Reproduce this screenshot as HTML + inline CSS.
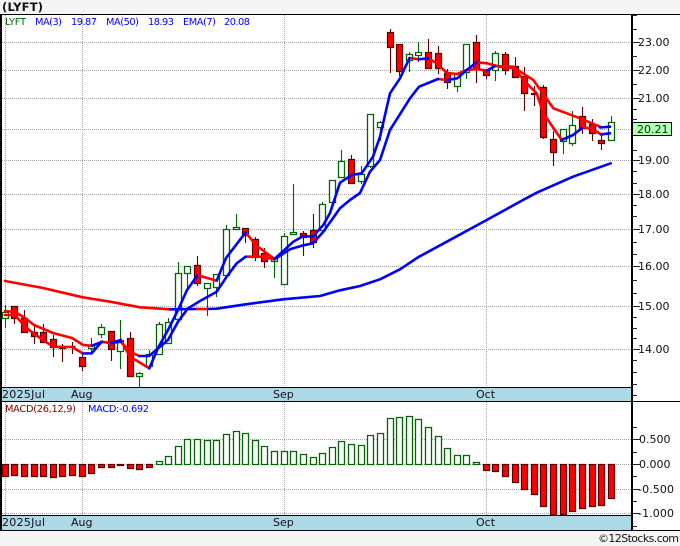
<!DOCTYPE html>
<html lang="en">
<head>
<meta charset="utf-8">
<title>LYFT</title>
<style>
html,body{margin:0;padding:0;background:#f4f4f4;width:680px;height:546px;overflow:hidden}
svg{display:block}
text{font-family:"DejaVu Sans","Liberation Sans",sans-serif;font-size:11px;fill:#111}
.l{font-size:9.8px}
</style>
</head>
<body>
<svg width="680" height="546" viewBox="0 0 680 546" xmlns="http://www.w3.org/2000/svg">
<rect width="680" height="546" fill="#f4f4f4"/>
<rect x="0" y="14" width="680" height="516" fill="#fff"/>
<rect x="0" y="388" width="632" height="13" fill="#add8e6"/>
<rect x="0" y="516" width="632" height="14" fill="#add8e6"/>

<!-- grid -->
<path fill="none" stroke="#a4a4a4" stroke-dasharray="1 1" d="M2 42.5H632M2 70.5H632M2 98.5H632M2 129.5H632M2 160.5H632M2 194.5H632M2 229.5H632M2 266.5H632M2 306.5H632M2 349.5H632M2 439.5H632M2 464.5H632M2 489.5H632M2 513.5H632M5.5 15V387M82.5 15V387M284.5 15V387M486.5 15V387M5.5 402V515M82.5 402V515M284.5 402V515M486.5 402V515"/>

<!-- frame -->
<path fill="none" stroke="#000" d="M0 14.5H680M0 387.5H632M0 401.5H680M0 515.5H632M0 530.5H680"/>
<path fill="none" stroke="#000" stroke-width="2" d="M1 14V530M632 14V530"/>
<path fill="none" stroke="#fff" stroke-width="1" d="M1.5 388V388"/>
<!-- right ticks -->
<path fill="none" stroke="#222" d="M632 42.5H640M632 70.5H640M632 98.5H640M632 129.5H640M632 160.5H640M632 194.5H640M632 229.5H640M632 266.5H640M632 306.5H640M632 349.5H640M632 15.5H637M632 29.5H637M632 56.5H637M632 84.5H637M632 109.5H637M632 119.5H637M632 150.5H637M632 171.5H637M632 183.5H637M632 205.5H637M632 216.5H637M632 242.5H637M632 254.5H637M632 280.5H637M632 293.5H637M632 317.5H637M632 328.5H637M632 338.5H637M632 360.5H637M632 372.5H637M632 384.5H637M632 395.5H637M632 439.5H640M632 464.5H640M632 489.5H640M632 513.5H640M632 427.5H637M632 452.5H637M632 476.5H637M632 501.5H637M632 526.5H637"/>

<!-- wicks -->
<path fill="none" stroke="#006400" stroke-width="1.1" d="M5.5 305V328M91.5 338V353M101.5 324V338M120.5 320V369M139.5 372V387M149.5 350V367M159.5 322V354M168.5 318V343M178.5 262V320M187.5 266V289M207.5 283V316M216.5 274V297M226.5 225V276M236.5 214V228M274.5 258V278M284.5 233V285M293.5 184V233M322.5 202V231M332.5 180V203M341.5 150V178M361.5 166V184M370.5 114V168M380.5 121V141M409.5 52V72M418.5 42V62M457.5 74V92M466.5 44V79M495.5 51V81M563.5 129V154M572.5 111V146M611.5 116V141"/>
<path fill="none" stroke="#5a0000" stroke-width="1.1" d="M14.5 306V324M24.5 310V333M34.5 324V344M43.5 324V343M53.5 335V357M62.5 344V362M72.5 342V354M82.5 354V371M111.5 331V361M130.5 332V376M197.5 256V286M245.5 228V243M255.5 237V261M264.5 248V268M303.5 231V256M313.5 214V248M351.5 155V184M390.5 29V73M399.5 44V76M428.5 39V68M438.5 46V74M447.5 69V89M476.5 35V83M486.5 69V79M505.5 52V75M515.5 57V78M524.5 67V111M534.5 86V106M543.5 85V139M553.5 131V166M582.5 107V134M592.5 119V141M601.5 135V150"/>

<!-- green bodies -->
<path fill="#fff" stroke="#006400" stroke-width="1.3" d="M2.5 312.5h6v6h-6zM88.5 345.5h6v3h-6zM98.5 327.5h6v7h-6zM117.5 340.5h6v11h-6zM136.5 373.5h6v3h-6zM146.5 354.5h6v12h-6zM156.5 324.5h6v30h-6zM165.5 322.5h6v21h-6zM175.5 273.5h6v46h-6zM184.5 266.5h6v7h-6zM204.5 283.5h6v5h-6zM213.5 274.5h6v13h-6zM223.5 229.5h6v46h-6zM233.5 227.5h6v2h-6zM271.5 258.5h6v3h-6zM281.5 236.5h6v48h-6zM290.5 232.5h6v2h-6zM319.5 204.5h6v26h-6zM329.5 180.5h6v22h-6zM338.5 161.5h6v16h-6zM358.5 174.5h6v7h-6zM367.5 114.5h6v52h-6zM377.5 122.5h6v5h-6zM406.5 54.5h6v6h-6zM415.5 52.5h6v3h-6zM454.5 74.5h6v12h-6zM463.5 44.5h6v28h-6zM492.5 53.5h6v17h-6zM560.5 129.5h6v12h-6zM569.5 125.5h6v18h-6zM608.5 122.5h6v18h-6z"/>
<!-- red bodies -->
<path fill="#ff0000" stroke="#5a0000" stroke-width="1.2" d="M11.5 306.5h6v12h-6zM21.5 318.5h6v14h-6zM31.5 332.5h6v4h-6zM40.5 332.5h6v10h-6zM50.5 339.5h6v8h-6zM59.5 347.5h6v1h-6zM69.5 346.5h6v0h-6zM79.5 357.5h6v9h-6zM108.5 331.5h6v18h-6zM127.5 338.5h6v38h-6zM194.5 265.5h6v18h-6zM242.5 228.5h6v7h-6zM252.5 239.5h6v18h-6zM261.5 253.5h6v8h-6zM300.5 233.5h6v4h-6zM310.5 230.5h6v12h-6zM348.5 159.5h6v24h-6zM387.5 32.5h6v15h-6zM396.5 44.5h6v27h-6zM425.5 52.5h6v16h-6zM435.5 53.5h6v15h-6zM444.5 73.5h6v9h-6zM473.5 42.5h6v27h-6zM483.5 69.5h6v6h-6zM502.5 54.5h6v16h-6zM512.5 66.5h6v11h-6zM521.5 76.5h6v17h-6zM531.5 93.5h6v1h-6zM540.5 87.5h6v50h-6zM550.5 139.5h6v13h-6zM579.5 116.5h6v12h-6zM589.5 124.5h6v9h-6zM598.5 140.5h6v3h-6z"/>

<!-- MA50 -->
<g fill="none" stroke-width="2.6" stroke-linejoin="round" stroke-linecap="round">
<path stroke="#ff0000" d="M5 281L43 288L82.7 297.3L110 301.7L140 307.3L170 309.3"/>
<path stroke="#0000ff" d="M170 309.3L197 309M207 309L216.7 308.7L245.7 304.3L283 299.3L320 296L340 290.3L360 286L380 279.3L400 269.3L418 257.3L453 238.3L486.7 220L523 200L536.7 192.7L573 176.7L610.7 163.3"/>
<path stroke="#ff0000" d="M197 309H207"/>

<!-- EMA7 and MA3, red segments -->
<path stroke="#ff0000" d="M5 311L15 312L25 318L34 325L53 333L72 338L83 345L92 345.7M101.7 342L111 343M120.7 341.7L130 351.7L139.3 356M245.7 256.7L263 256.7L274.5 259.3M438 79L447 80M476.7 62.3L486.7 63.3L500 66.7L515 68.3L533.3 80L553.3 108.3L580 118.3L600 126.7"/>
<path stroke="#ff0000" d="M5 315L15 315L25 326.7L33 333L43 340L53 346.7L72 347L83 353.5M101.7 341.7L111 343M120.7 340L130 356.7L149.3 368.3M197 275L216.7 280.7M245.7 232.3L255.7 245L274.5 259M409.5 58L418.7 59.3M428.3 58.3L436.7 63.3L447 73L457.3 74L466.7 70L476.7 69L486.7 70.7M495 66L513 66.7L525 81.7L536.7 93.3L543.3 113.3L561.7 140M581.7 127.3L591.7 128.3L601.7 135"/>
<!-- blue segments -->
<path stroke="#0000ff" d="M92 345.7L101.7 342M111 343L120.7 341.7M139.3 356L149 356L160 346.7L168 340L178 321.7L188 308.3L200 301L216.7 291.7L226.7 276.7L236.7 263.3L245.7 256.7M274.5 259.3L290 249.3L301.7 245.7L313 243.3L323.3 231.7L340 208.3L350 200L360 193L370 171.7L380 160L390 130L410 98.3L419 86.7L438 79M447 80L457.3 78.3L466.7 70L476.7 62.3M600 127.5L610 126.7"/>
<path stroke="#0000ff" d="M83 353.5L91.7 353.3L101.7 341.7M111 343L120.7 340M149.3 368.3L158.5 347L168 330L178 310L187 290L197 276M216.7 280.7L226 258L245.7 232.3M274.5 259L293.3 241.7L303.3 236L312.7 236.7L323.3 225L330 213L340 182.7L351.7 175L361.7 173.3L373 156.7L380 136.7L390 93.3L400 78.3L409.5 58M418.7 59.3L428.3 58.3M486.7 70.7L495 66M561.7 140L573 135L581.7 128.3M601.7 134.3L610 133.3"/>
</g>

<!-- MACD -->
<path fill="#fff" stroke="#006400" stroke-width="1.3" d="M156.5 461.5h6V464.5h-6zM165.5 456.5h6V464.5h-6zM175.5 446.5h6V464.5h-6zM184.5 439.5h6V464.5h-6zM194.5 439.5h6V464.5h-6zM204.5 440.5h6V464.5h-6zM213.5 440.5h6V464.5h-6zM223.5 434.5h6V464.5h-6zM233.5 431.5h6V464.5h-6zM242.5 433.5h6V464.5h-6zM252.5 440.5h6V464.5h-6zM261.5 446.5h6V464.5h-6zM271.5 451.5h6V464.5h-6zM281.5 451.5h6V464.5h-6zM290.5 451.5h6V464.5h-6zM300.5 454.5h6V464.5h-6zM310.5 457.5h6V464.5h-6zM319.5 453.5h6V464.5h-6zM329.5 447.5h6V464.5h-6zM338.5 441.5h6V464.5h-6zM348.5 444.5h6V464.5h-6zM358.5 445.5h6V464.5h-6zM367.5 435.5h6V464.5h-6zM377.5 433.5h6V464.5h-6zM387.5 418.5h6V464.5h-6zM396.5 417.5h6V464.5h-6zM406.5 416.5h6V464.5h-6zM415.5 419.5h6V464.5h-6zM425.5 427.5h6V464.5h-6zM435.5 436.5h6V464.5h-6zM444.5 448.5h6V464.5h-6zM454.5 455.5h6V464.5h-6zM463.5 455.5h6V464.5h-6zM473.5 462.5h6V464.5h-6z"/>
<path fill="#ff0000" stroke="#5a0000" stroke-width="1.2" d="M2.5 464.5h6V476.5h-6zM11.5 464.5h6V475.5h-6zM21.5 464.5h6V476.5h-6zM31.5 464.5h6V476.5h-6zM40.5 464.5h6V476.5h-6zM50.5 464.5h6V477.5h-6zM59.5 464.5h6V476.5h-6zM69.5 464.5h6V475.5h-6zM79.5 464.5h6V476.5h-6zM88.5 464.5h6V473.5h-6zM98.5 464.5h6V467.5h-6zM108.5 464.5h6V467.5h-6zM117.5 464.5h6V465.5h-6zM127.5 464.5h6V468.5h-6zM136.5 464.5h6V469.5h-6zM146.5 464.5h6V467.5h-6zM483.5 464.5h6V470.5h-6zM492.5 464.5h6V471.5h-6zM502.5 464.5h6V476.5h-6zM512.5 464.5h6V482.5h-6zM521.5 464.5h6V489.5h-6zM531.5 464.5h6V494.5h-6zM540.5 464.5h6V506.5h-6zM550.5 464.5h6V515h-6zM560.5 464.5h6V514.5h-6zM569.5 464.5h6V511.5h-6zM579.5 464.5h6V508.5h-6zM589.5 464.5h6V506.5h-6zM598.5 464.5h6V505.5h-6zM608.5 464.5h6V498.5h-6z"/>

<!-- title / legends -->
<text x="2" y="11" style="font-weight:bold;font-size:11.5px" fill="#000" textLength="41">(LYFT)</text>
<text class="l" x="5" y="25" style="fill:#006400" textLength="21">LYFT</text>
<text class="l" x="35" y="25" style="fill:#0000ff" textLength="27">MA(3)</text>
<text class="l" x="71" y="25" style="fill:#0000ff" textLength="26">19.87</text>
<text class="l" x="106" y="25" style="fill:#0000ff" textLength="33">MA(50)</text>
<text class="l" x="148" y="25" style="fill:#0000ff" textLength="26">18.93</text>
<text class="l" x="183" y="25" style="fill:#0000ff" textLength="33">EMA(7)</text>
<text class="l" x="224" y="25" style="fill:#0000ff" textLength="26">20.08</text>
<text class="l" x="5" y="412" style="fill:#800000" textLength="71">MACD(26,12,9)</text>
<text class="l" x="88" y="412" style="fill:#0000ff" textLength="61">MACD:-0.692</text>

<!-- axis labels -->
<text x="638" y="46">23.00</text>
<text x="638" y="74">22.00</text>
<text x="638" y="102">21.00</text>
<text x="638" y="164">19.00</text>
<text x="638" y="198">18.00</text>
<text x="638" y="233">17.00</text>
<text x="638" y="270">16.00</text>
<text x="638" y="310">15.00</text>
<text x="638" y="353">14.00</text>
<rect x="632.5" y="122.5" width="39" height="13" fill="#b4ffb4" stroke="#000"/>
<text x="637" y="133" style="fill:#003000">20.21</text>

<text x="639" y="443">0.500</text>
<text x="639" y="468">0.000</text>
<text x="638" y="493" textLength="36">-0.500</text>
<text x="638" y="517" textLength="36">-1.000</text>

<text x="2" y="398" textLength="43">2025Jul</text>
<text x="71" y="398">Aug</text>
<text x="273" y="398">Sep</text>
<text x="476" y="398">Oct</text>
<text x="2" y="526" textLength="43">2025Jul</text>
<text x="71" y="526">Aug</text>
<text x="273" y="526">Sep</text>
<text x="476" y="526">Oct</text>

<text x="598" y="542" textLength="81">©12Stocks.com</text>
</svg>
</body>
</html>
